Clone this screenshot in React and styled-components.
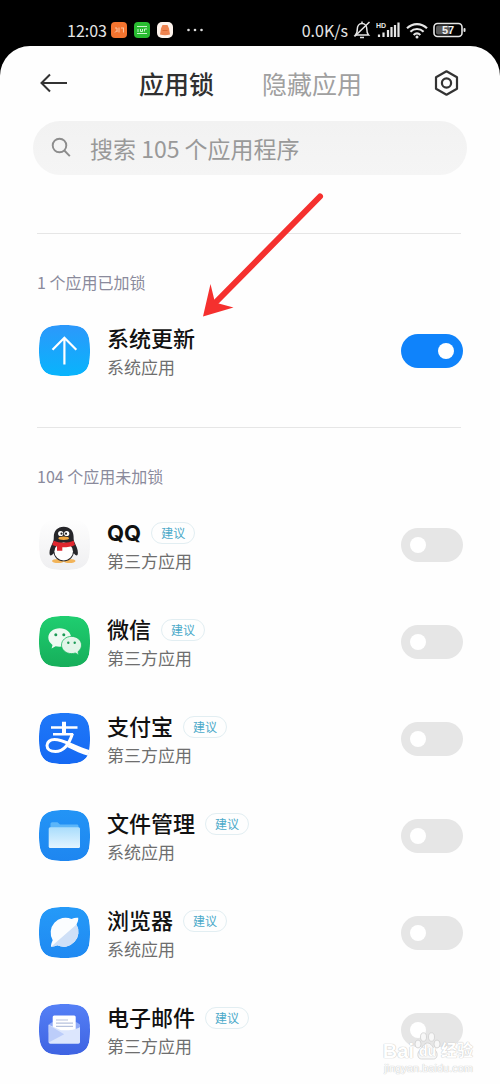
import React, { useState } from 'react'
import styled, { createGlobalStyle } from 'styled-components'

const GlobalStyle = createGlobalStyle`
  * {
    box-sizing: border-box;
  }
  body {
    margin: 0;
    background: #000000;
    font-family: "Noto Sans CJK SC", "Noto Sans", sans-serif;
  }
  button, input {
    font-family: inherit;
  }
`

const Page = styled.div`
  position: relative;
  display: flex;
  flex-direction: column;
  min-height: 100vh;
  overflow: hidden;
`

const StatusBar = styled.div`
  display: flex;
  align-items: center;
  justify-content: space-between;
  height: 46px;
  padding: 14px 34px 0 67px;
  color: #e6e6e6;
  font-size: 16px;
  font-weight: 400;
  line-height: 24px;
`

const StatusGroup = styled.div`
  display: flex;
  align-items: center;
  gap: ${props => props.$gap}px;
`

const Sheet = styled.main`
  flex: 1;
  background: #fefefe;
  border-radius: 30px 30px 0 0;
`

const Header = styled.header`
  display: flex;
  align-items: center;
  justify-content: space-between;
  height: 74px;
  padding: 0 40px;
`

const IconButton = styled.button`
  display: flex;
  padding: 0;
  border: 0;
  background: none;
  color: #333333;
`

const Tabs = styled.nav`
  display: flex;
  gap: 48px;
`

const Tab = styled.button`
  padding: 0;
  border: 0;
  background: none;
  color: ${props => (props.$active ? '#303030' : '#a0a0a0')};
  font-size: 25px;
  font-weight: ${props => (props.$active ? 500 : 400)};
  line-height: 36px;
`

const Search = styled.label`
  display: flex;
  align-items: center;
  gap: 18px;
  height: 54px;
  margin: 1px 33px 58px;
  padding: 0 18px;
  border-radius: 27px;
  background: linear-gradient(#f2f2f2, #f5f5f5);
  color: #8c8c8c;
`

const SearchInput = styled.input`
  flex: 1;
  min-width: 0;
  padding: 0;
  border: 0;
  outline: 0;
  background: none;
  color: #333333;
  font-size: 23px;
  line-height: 32px;
  &::placeholder {
    color: #999999;
    opacity: 1;
  }
`

const Divider = styled.hr`
  height: 1px;
  margin: ${props => props.$top || 0}px 39px 0 37px;
  border: 0;
  background: #e6e6e6;
`

const SectionTitle = styled.h2`
  margin: 36px 37px 8px;
  color: #8a8a9c;
  font-size: 16px;
  font-weight: 400;
  line-height: 24px;
`

const List = styled.ul`
  margin: 0;
  padding: 0;
  list-style: none;
`

const Row = styled.li`
  display: flex;
  align-items: center;
  gap: 17px;
  height: 97px;
  padding: 0 37px 0 39px;
`

const Info = styled.div`
  flex: 1;
  padding-top: 2px;
`

const NameLine = styled.div`
  display: flex;
  align-items: center;
  gap: 10px;
`

const Name = styled.label`
  color: #111111;
  font-family: Inter, "Noto Sans CJK SC", sans-serif;
  font-size: 22px;
  font-weight: ${props => (props.$latin ? 700 : 500)};
  line-height: 30px;
`

const Tag = styled.span`
  padding: 0 9px;
  border: 1px solid #e2eef2;
  border-radius: 12px;
  color: #4aa9c9;
  font-size: 12px;
  line-height: 20px;
`

const Kind = styled.div`
  color: #6e6e6e;
  font-size: 17px;
  line-height: 26px;
`

const Switch = styled.input`
  appearance: none;
  display: flex;
  align-items: center;
  justify-content: flex-start;
  width: 62px;
  height: 34px;
  margin: 0;
  padding: 0 9px;
  border-radius: 17px;
  background: #e6e6e6;
  &::before {
    content: '';
    width: 16px;
    height: 16px;
    border-radius: 50%;
    background: #ffffff;
  }
  &:checked {
    justify-content: flex-end;
    background: #0f83fb;
  }
`

const Pointer = styled.svg`
  position: absolute;
  top: 190px;
  left: 200px;
  pointer-events: none;
`

const Watermark = styled.div`
  position: absolute;
  right: 27px;
  bottom: 9px;
  display: flex;
  flex-direction: column;
  align-items: flex-end;
  color: #ffffff;
  font-family: "Liberation Sans", "Noto Sans CJK SC", sans-serif;
  text-shadow: 0 0 1px #c4c4c4, 0 0 1px #c4c4c4;
  pointer-events: none;
`

const Brand = styled.div`
  display: flex;
  align-items: flex-end;
  font-size: ${props => props.$size}px;
  font-weight: 700;
  line-height: 20px;
`

const BrandPart = styled.span`
  font-size: ${props => props.$size}px;
  line-height: 20px;
`

const PawBox = styled.span`
  display: grid;
  place-items: end center;
  > * {
    grid-area: 1 / 1;
  }
`

const Site = styled.div`
  font-size: 11px;
  line-height: 14px;
`

const SQUIRCLE =
  'M25.5 0C36 0 42 .8 46 5S51 15 51 25.500 50.200 42 46 46 36 51 25.500 51 9 50.200 5 46 0 36 0 25.500.8 9 5 5 15 0 25.500 0z'

const AppIcon = ({ id, from, to, children }) => (
  <svg width="51" height="51" viewBox="0 0 51 51" aria-hidden="true">
    <defs>
      <linearGradient id={`${id}-bg`} x1="0" y1="0" x2="0" y2="1">
        <stop offset="0" stopColor={from} />
        <stop offset="1" stopColor={to} />
      </linearGradient>
      <clipPath id={`${id}-clip`}>
        <path d={SQUIRCLE} />
      </clipPath>
    </defs>
    <g clipPath={`url(#${id}-clip)`}>
      <path d={SQUIRCLE} fill={`url(#${id}-bg)`} />
      {children}
    </g>
  </svg>
)

const UpdateIcon = () => (
  <AppIcon id="update" from="#2c98fb" to="#08b4fc">
    <path
      d="M25.4 13v26.500M13.500 24.700 25.400 12.800 37.300 24.700"
      fill="none"
      stroke="#ffffff"
      strokeWidth="2.2"
    />
  </AppIcon>
)

const QQIcon = () => (
  <AppIcon id="qq" from="#fefefe" to="#efeff1">
    <ellipse cx="19" cy="42" rx="6" ry="2" fill="#f2b45a" />
    <ellipse cx="30.500" cy="42" rx="6" ry="2" fill="#f2b45a" />
    <path
      d="M24.700 7.700c-6.200 0-9.900 4.300-9.900 10 0 2.500-.2 4-1 5.800-1.800 3.600-3.300 7-3.300 10.200 0 3.400 1.500 3.800 4.100.6 1.500 5.400 5.200 8 10.100 8s8.600-2.600 10.100-8c2.600 3.200 4.100 2.800 4.100-.6 0-3.200-1.500-6.600-3.300-10.200-.8-1.800-1-3.300-1-5.800 0-5.700-3.700-10-9.900-10z"
      fill="#26262a"
    />
    <ellipse cx="24.700" cy="32.500" rx="9.300" ry="9" fill="#ffffff" />
    <circle cx="21.700" cy="14.500" r="2.600" fill="#ffffff" />
    <circle cx="27.700" cy="14.500" r="2.600" fill="#ffffff" />
    <circle cx="22.500" cy="14.700" r="1.100" fill="#26262a" />
    <circle cx="27" cy="14.700" r="1.100" fill="#26262a" />
    <ellipse cx="24.700" cy="19.300" rx="5.300" ry="1.700" fill="#efa640" />
    <path
      d="M14.700 21.800c5.500 2.600 14.500 2.600 20 0l1.200 4.200c-4 2-8.500 2.400-12.600 2.300v3.400h-5.300v-4.300c-2-.4-3.500-.9-4.700-1.400z"
      fill="#e0262f"
    />
  </AppIcon>
)

const WechatIcon = () => (
  <AppIcon id="wechat" from="#1fce70" to="#16ae5a">
    <path
      d="M20.700 12.200C14.300 12.200 9.300 16.300 9.300 21.600c0 3 1.700 5.600 4.200 7.300l-.9 3.500 4-2.100c7.500 1.900 15.500-2 15.500-8.700 0-5.300-5-9.400-11.400-9.400z"
      fill="#eefaf2"
    />
    <path
      d="M32.500 20.400c-5.600 0-10 3.800-10 8.600s4.400 8.600 10 8.600c1.400 0 2.700-.2 3.800-.6l3.500 1.900-.8-3.200c2.200-1.600 3.500-4 3.500-6.700 0-4.800-4.400-8.600-10-8.600z"
      fill="#e3f5e9"
      stroke="#1bb961"
      strokeWidth=".8"
    />
    <g fill="#1d9b56">
      <circle cx="16.800" cy="18.700" r="1.500" />
      <circle cx="24.800" cy="18.700" r="1.500" />
      <circle cx="29.300" cy="26.700" r="1.200" />
      <circle cx="35.700" cy="26.700" r="1.200" />
    </g>
  </AppIcon>
)

const AlipayIcon = () => (
  <AppIcon id="alipay" from="#1f78f8" to="#1569f3">
    <g fill="none" stroke="#ffffff">
      <path d="M12 14.500h26.500M14 21.300h20" strokeWidth="2.600" />
      <path d="M25 8.700v12.500" strokeWidth="4" />
      <path
        d="M33.500 20.500c-2.200 7-7 18-17 18-5.500 0-8.500-2.500-8.500-6 0-3.400 3-6 7.500-6 9.500 0 19 7.500 37 12.800"
        strokeWidth="3"
      />
    </g>
    <path d="M30 31.500c8 3.300 14 4.900 21 6.200v5.600c-8-2.200-16-5.800-23-9.300z" fill="#ffffff" />
  </AppIcon>
)

const FolderIcon = () => (
  <AppIcon id="folder" from="#2394f6" to="#1e86f0">
    <defs>
      <linearGradient id="folder-front" x1="0" y1="0" x2="0" y2="1">
        <stop offset="0" stopColor="#a9ddfc" />
        <stop offset="1" stopColor="#e4f5ff" />
      </linearGradient>
    </defs>
    <path
      d="M11.500 14c0-1 .7-1.700 1.700-1.700h5.300l2.500 2.200h16.800c1 0 1.700.7 1.700 1.700v6h-28z"
      fill="#5cb6f9"
    />
    <rect x="9.700" y="17.300" width="31.300" height="20.700" rx="1.500" fill="url(#folder-front)" />
  </AppIcon>
)

const BrowserIcon = () => (
  <AppIcon id="browser" from="#259af8" to="#1f89f2">
    <path
      d="M39.200 10.800c.3 2.200-.6 4.600-1.700 6.600A14.900 14.900 0 0 1 18.300 38.300c-2 1-4.200 1.500-6.300 1.400-.1-2 .6-4.300 1.700-6.500A14.900 14.900 0 0 1 32.500 12c2.200-1 4.400-1.500 6.700-1.200z"
      fill="#fbfdff"
    />
    <path d="M37.500 17.400A14.900 14.900 0 0 1 18.300 38.300c-2 1-4.200 1.500-6.300 1.400z" fill="#cfe0f7" />
  </AppIcon>
)

const MailIcon = () => (
  <AppIcon id="mail" from="#5580f6" to="#3e63e2">
    <path d="M9.700 20.500 13 18.300h24.700l3.300 2.200v8H9.700z" fill="#8faaf7" />
    <rect x="13.700" y="11.500" width="23" height="20" rx="1.500" fill="#ffffff" />
    <path d="M17 16h12M17 19.200h17M17 22.300h17" stroke="#b7c2dd" strokeWidth="1.200" />
    <path
      d="M9.700 20.800 22 26.200h5.500c6 0 11-1.500 13.500-3.200v15c0 1-.7 1.700-1.700 1.700H11.400c-1 0-1.700-.7-1.700-1.700z"
      fill="#dce6fd"
    />
    <path d="m9.700 21 15.500 9.300L9.700 38.500z" fill="#bccdfa" />
  </AppIcon>
)

const BackIcon = () => (
  <svg width="28" height="20" viewBox="0 0 28 20" aria-hidden="true">
    <path
      d="M27 10H1.500M10 1.500 1.500 10l8.500 8.500"
      fill="none"
      stroke="currentColor"
      strokeWidth="2"
    />
  </svg>
)

const SettingsIcon = () => (
  <svg width="27" height="28" viewBox="0 0 27 28" aria-hidden="true">
    <g fill="none" stroke="currentColor" strokeWidth="2.200" strokeLinejoin="round">
      <path d="M13.500 2.300 24 8.200v11.600l-10.500 5.900L3 19.800V8.200z" />
      <circle cx="13.500" cy="14" r="4.600" />
    </g>
  </svg>
)

const SearchIcon = () => (
  <svg width="21" height="22" viewBox="0 0 21 22" aria-hidden="true">
    <g fill="none" stroke="currentColor" strokeWidth="1.900">
      <circle cx="8.500" cy="8.500" r="6.800" />
      <path d="m13.300 13.500 5.500 5.700" />
    </g>
  </svg>
)

const Notifications = () => (
  <svg width="96" height="18" viewBox="0 0 96 18" aria-hidden="true">
    <rect x="0" y="1" width="16" height="16" rx="4" fill="#f4742f" />
    <path d="M4 7h2v4M8 6.500v5M10 7h2M12.500 6.500v5M4 11.500l2-2" stroke="#fbc3a2" fill="none" />
    <rect x="23" y="1" width="16" height="16" rx="4" fill="#29bd31" />
    <path d="M26 5.500h10M26 12.500h10M27 8v3M29.500 8v2.500h2V8M33.500 10.500V8H36" stroke="#c9f5cb" fill="none" />
    <rect x="46" y="1" width="16" height="16" rx="5" fill="#fdf3ec" />
    <path d="M50 7.500 51.500 4h5L58 7.500l1 6q-5 1.500-10 0z" fill="#ef8450" />
    <path d="M51.500 9.500h5" stroke="#d96833" />
    <g fill="#dddddd">
      <circle cx="77.500" cy="9" r="1.300" />
      <circle cx="84" cy="9" r="1.300" />
      <circle cx="90.500" cy="9" r="1.300" />
    </g>
  </svg>
)

const MuteIcon = () => (
  <svg width="18" height="18" viewBox="0 0 18 18" aria-hidden="true">
    <g fill="none" stroke="#e6e6e6" strokeWidth="1.500">
      <path d="M3 14h12.500c-1.500-1.500-1.700-3-1.700-6C13.800 5 12 2.500 9 2.500S4.300 5 4.300 8c0 3-.1 4.500-1.800 6z" />
      <path d="M7 16.500h4M16.500 1 1.500 15.500" />
      <path d="M9 .6v2" />
    </g>
  </svg>
)

const SignalIcon = () => (
  <svg width="25" height="18" viewBox="0 0 25 18" aria-hidden="true">
    <text x="0" y="6.500" fill="#e6e6e6" fontSize="7" fontWeight="700" fontFamily="Liberation Sans, sans-serif">
      HD
    </text>
    <path
      d="M3 13.500V16M7.500 11.500V16M12 9V16M15.500 6v10M19 4v12M22.500 1.500V16"
      stroke="#e6e6e6"
      strokeWidth="2.200"
    />
  </svg>
)

const WifiIcon = () => (
  <svg width="22" height="17" viewBox="0 0 22 17" aria-hidden="true">
    <g fill="none" stroke="#e6e6e6" strokeWidth="2.100">
      <path d="M1 6.300c5.700-5.600 14.300-5.600 20 0" />
      <path d="M4.400 9.700c3.800-3.700 9.400-3.700 13.200 0" />
      <path d="M7.600 12.900c2-1.900 4.800-1.900 6.800 0" />
    </g>
    <circle cx="11" cy="15" r="1.500" fill="#e6e6e6" />
  </svg>
)

const BatteryIcon = () => (
  <svg width="33" height="16" viewBox="0 0 33 16" aria-hidden="true">
    <rect x="1" y="1.500" width="28" height="13" rx="3.500" fill="none" stroke="#e6e6e6" strokeWidth="1.600" />
    <rect x="3" y="3.500" width="14" height="9" rx="2" fill="#5a5a5a" />
    <rect x="30.500" y="6" width="2" height="4" rx="1" fill="#e6e6e6" />
    <text x="15" y="12" fill="#f2f2f2" fontSize="11" fontWeight="700" textAnchor="middle" fontFamily="Liberation Sans, sans-serif">
      57
    </text>
  </svg>
)

const PawIcon = () => (
  <svg width="27" height="30" viewBox="0 0 27 30" aria-hidden="true">
    <g fill="#f8f8f8" stroke="#cfcfcf" strokeWidth=".8">
      <ellipse cx="4" cy="13" rx="3" ry="4" />
      <ellipse cx="9.500" cy="6" rx="3" ry="4.200" />
      <ellipse cx="17.500" cy="6" rx="3" ry="4.200" />
      <ellipse cx="23" cy="13" rx="3" ry="4" />
      <path d="M13.500 12c-4 0-5 4.500-8 7.500-2.800 3-2 8.500 2 8.500h12c4 0 4.800-5.500 2-8.500-3-3-4-7.500-8-7.500z" />
    </g>
  </svg>
)

const apps = [
  { id: 'update', name: '系统更新', kind: '系统应用', icon: UpdateIcon },
  { id: 'qq', name: 'QQ', kind: '第三方应用', icon: QQIcon, suggested: true, latin: true },
  { id: 'wechat', name: '微信', kind: '第三方应用', icon: WechatIcon, suggested: true },
  { id: 'alipay', name: '支付宝', kind: '第三方应用', icon: AlipayIcon, suggested: true },
  { id: 'files', name: '文件管理', kind: '系统应用', icon: FolderIcon, suggested: true },
  { id: 'browser', name: '浏览器', kind: '系统应用', icon: BrowserIcon, suggested: true },
  { id: 'mail', name: '电子邮件', kind: '第三方应用', icon: MailIcon, suggested: true }
]

const AppRow = ({ app }) => {
  const [locked, setLocked] = useState(app.id === 'update')
  const Icon = app.icon

  return (
    <Row>
      <Icon />
      <Info>
        <NameLine>
          <Name htmlFor={`lock-${app.id}`} $latin={app.latin}>{app.name}</Name>
          {app.suggested && <Tag>建议</Tag>}
        </NameLine>
        <Kind>{app.kind}</Kind>
      </Info>
      <Switch
        id={`lock-${app.id}`}
        type="checkbox"
        role="switch"
        checked={locked}
        onChange={e => setLocked(e.target.checked)}
      />
    </Row>
  )
}

const App = () => {
  const [tab, setTab] = useState('lock')

  return (
    <Page>
      <GlobalStyle />
      <StatusBar>
        <StatusGroup $gap={4}>
          <span>12:03</span>
          <Notifications />
        </StatusGroup>
        <StatusGroup $gap={5}>
          <span>0.0K/s</span>
          <MuteIcon />
          <SignalIcon />
          <WifiIcon />
          <BatteryIcon />
        </StatusGroup>
      </StatusBar>
      <Sheet>
        <Header>
          <IconButton type="button" aria-label="返回">
            <BackIcon />
          </IconButton>
          <Tabs>
            <Tab type="button" $active={tab === 'lock'} onClick={() => setTab('lock')}>
              应用锁
            </Tab>
            <Tab type="button" $active={tab === 'hide'} onClick={() => setTab('hide')}>
              隐藏应用
            </Tab>
          </Tabs>
          <IconButton type="button" aria-label="设置">
            <SettingsIcon />
          </IconButton>
        </Header>
        <Search>
          <SearchIcon />
          <SearchInput type="text" aria-label="搜索" placeholder="搜索 105 个应用程序" />
        </Search>
        <Divider />
        <SectionTitle>1 个应用已加锁</SectionTitle>
        <List>
          <AppRow app={apps[0]} />
        </List>
        <Divider $top={28} />
        <SectionTitle>104 个应用未加锁</SectionTitle>
        <List>
          {apps.slice(1).map(app => (
            <AppRow key={app.id} app={app} />
          ))}
        </List>
      </Sheet>
      <Pointer width="130" height="130" viewBox="0 0 130 130" aria-hidden="true">
        <path d="M120 6.500 14 114" stroke="#f5302e" strokeWidth="6" strokeLinecap="round" />
        <path d="M3 126.500 10.500 94l4.500 18.500 18.500 5z" fill="#f5302e" />
      </Pointer>
      <Watermark aria-hidden="true">
        <Brand $size={20}>
          <BrandPart $size={20}>Bai</BrandPart>
          <PawBox>
            <PawIcon />
            <BrandPart $size={14}>du</BrandPart>
          </PawBox>
          <BrandPart $size={16}>经验</BrandPart>
        </Brand>
        <Site>jingyan.baidu.com</Site>
      </Watermark>
    </Page>
  )
}

export default App
